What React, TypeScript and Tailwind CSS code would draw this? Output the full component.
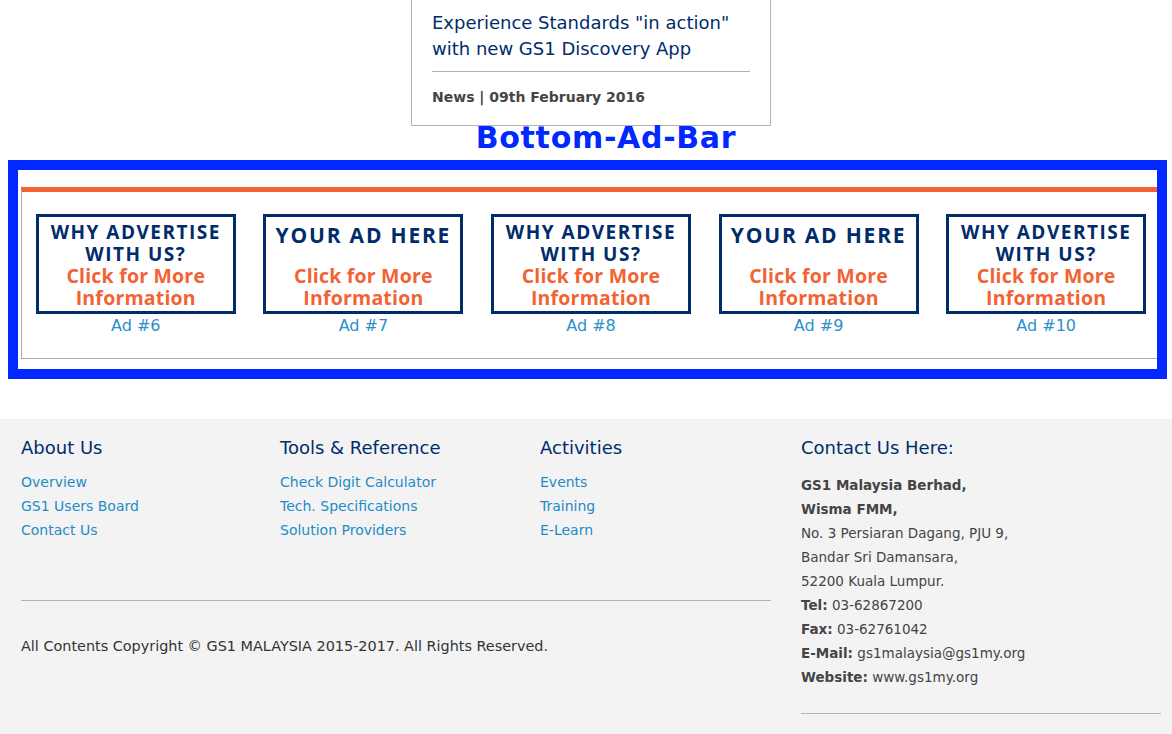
import React from "react";

const NAVY = "text-[#002c6c]";

function AdBox({ kind, n }: { kind: "why" | "your"; n: number }) {
  return (
    <div className="flex flex-col items-center">
      <div className="w-[200px] h-[100px] border-[3px] border-[#002c6c] bg-white pt-[4px] flex flex-col items-center font-['Open_Sans',sans-serif] font-bold whitespace-nowrap">
        {kind === "why" ? (
          <>
            <div className={`${NAVY} text-[19px] leading-[22px] tracking-[1.5px]`}>WHY ADVERTISE</div>
            <div className={`${NAVY} text-[19px] leading-[22px] tracking-[1.5px]`}>WITH US?</div>
          </>
        ) : (
          <div className={`${NAVY} text-[21px] leading-[28px] h-[44px] tracking-[1.8px]`}>YOUR AD HERE</div>
        )}
        <div className="text-[#f26334] text-[19.5px] leading-[22px] tracking-[0.2px]">Click for More</div>
        <div className="text-[#f26334] text-[19.5px] leading-[22px] tracking-[0.2px]">Information</div>
      </div>
      <div className="text-[16px] leading-[20px] mt-[2px] text-[#2b8fcb] font-['DejaVu_Sans',sans-serif]">Ad #{n}</div>
    </div>
  );
}

export default function App() {
  const ads: { kind: "why" | "your"; n: number }[] = [
    { kind: "why", n: 6 },
    { kind: "your", n: 7 },
    { kind: "why", n: 8 },
    { kind: "your", n: 9 },
    { kind: "why", n: 10 },
  ];
  const linkCls = "text-[14px] leading-[24px] text-[#1f8cc6]";
  const headCls = "text-[18px] leading-[24px] text-[#002c6c] pb-[10px]";
  return (
    <div className="w-[1172px] min-h-[734px] bg-white font-['DejaVu_Sans',sans-serif] overflow-hidden">
      {/* News card */}
      <div className="flex justify-center pl-[10px]">
        <div className="w-[360px] border border-t-0 border-[#b3b3b3] px-[20px] pt-[10px] pb-[18px]">
          <div className={`${NAVY} text-[18px] leading-[26px]`}>
            Experience Standards "in action"
            <br />
            with new GS1 Discovery App
          </div>
          <div className="h-px bg-[#b3b3b3] mt-[9px] w-[318px]" />
          <div className="text-[14px] leading-[20px] font-bold text-[#454545] mt-[15px]">
            News | 09th February 2016
          </div>
        </div>
      </div>
      {/* Heading */}
      <div className="h-[34px] flex items-start justify-center pl-[40px]">
        <div className="text-[#0028ff] text-[30px] font-bold tracking-[0.7px] leading-[24px]">
          Bottom-Ad-Bar
        </div>
      </div>
      {/* Blue frame */}
      <div className="ml-[8px] w-[1159px] h-[219px] border-[10px] border-[#0028ff] overflow-hidden bg-white">
        <div className="ml-[3px] mt-[17px] w-[1140px] border-t-[5px] border-t-[#f26334] border-l border-b border-[#aaaaaa] h-[172px]">
          <div className="grid grid-cols-5 w-[1138px] pt-[22px]">
            {ads.map((a) => (
              <AdBox key={a.n} kind={a.kind} n={a.n} />
            ))}
          </div>
        </div>
      </div>
      {/* Footer */}
      <div className="mt-[40px] bg-[#f3f3f3] h-[400px] pt-[17px] px-[21px]">
        <div className="flex">
          <div className="w-[780px]">
            <div className="grid grid-cols-3 w-[780px]">
              <div>
                <div className={headCls}>About Us</div>
                <div className={linkCls}>Overview</div>
                <div className={linkCls}>GS1 Users Board</div>
                <div className={linkCls}>Contact Us</div>
              </div>
              <div className="-ml-[1px]">
                <div className={headCls}>Tools &amp; Reference</div>
                <div className={linkCls}>Check Digit Calculator</div>
                <div className={linkCls}>Tech. Specifications</div>
                <div className={linkCls}>Solution Providers</div>
              </div>
              <div className="-ml-[1px]">
                <div className={headCls}>Activities</div>
                <div className={linkCls}>Events</div>
                <div className={linkCls}>Training</div>
                <div className={linkCls}>E-Learn</div>
              </div>
            </div>
            <div className="h-px bg-[#b3b3b3] w-[750px] mt-[58px]" />
            <div className="mt-[35px] text-[14.4px] leading-[20px] text-[#333333]">
              All Contents Copyright © GS1 MALAYSIA 2015-2017. All Rights Reserved.
            </div>
          </div>
          <div className="w-[360px]">
            <div className={headCls}>Contact Us Here:</div>
            <div className="text-[13.5px] leading-[24px] font-bold text-[#444444] pt-[3px]">GS1 Malaysia Berhad,</div>
            <div className="text-[13.5px] leading-[24px] text-[#444444]">
              <div className="font-bold">Wisma FMM,</div>
              <div>No. 3 Persiaran Dagang, PJU 9,</div>
              <div>Bandar Sri Damansara,</div>
              <div>52200 Kuala Lumpur.</div>
              <div><b>Tel:</b> 03-62867200</div>
              <div><b>Fax:</b> 03-62761042</div>
              <div><b>E-Mail:</b> gs1malaysia@gs1my.org</div>
              <div><b>Website:</b> www.gs1my.org</div>
            </div>
            <div className="h-px bg-[#b3b3b3] w-[360px] mt-[24px]" />
          </div>
        </div>
      </div>
    </div>
  );
}
